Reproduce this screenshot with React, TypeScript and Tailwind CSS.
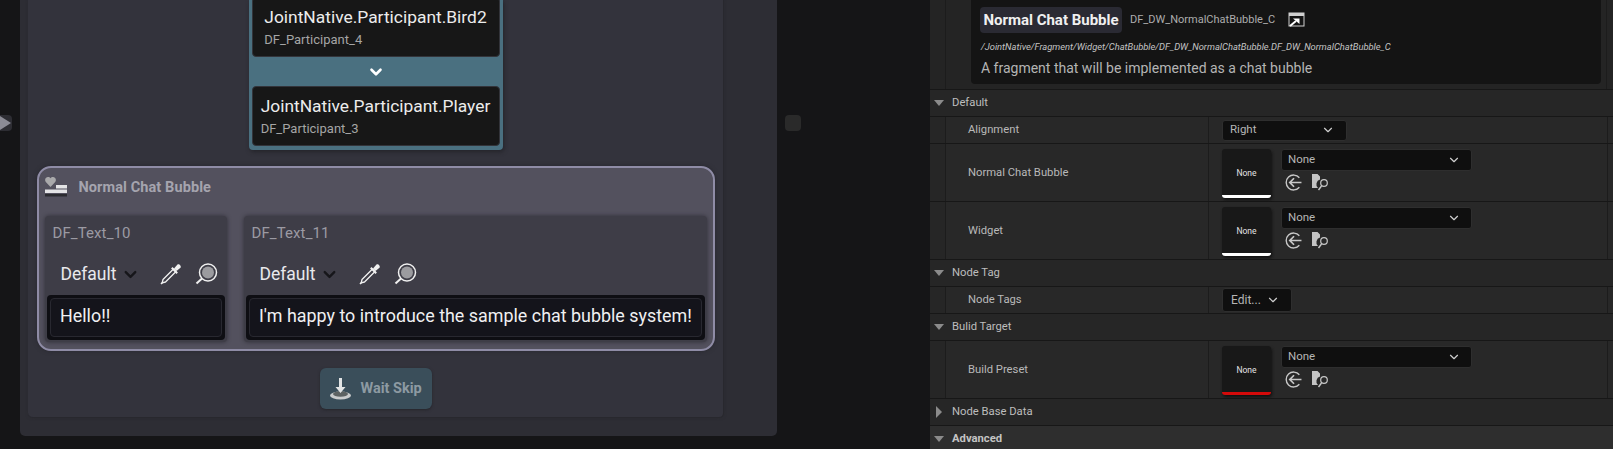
import { ChevronDown } from "lucide-react";
import type { ReactNode } from "react";

const HeartLines = () => (
  <svg width="23" height="20" viewBox="0 0 23 20" className="mt-[1px] shrink-0">
    <path d="M5.500 10 .800 5C-.800 2.800.600 0 3 0c1.200 0 2 .5 2.500 1.300C6 .5 6.800 0 8 0c2.400 0 3.800 2.800 2.200 5z" fill="#a9a9ab" />
    <rect x="11" y="8" width="11" height="3.500" fill="#e4e4e6" />
    <rect x="0" y="12.500" width="22" height="3.500" fill="#e4e4e6" />
    <rect x="0" y="17" width="22" height="2.500" fill="#2b2b30" />
  </svg>
);

const Dropper = () => (
  <svg width="22" height="22" viewBox="0 0 22 22" className="shrink-0">
    <path d="M13.500 6 3 16.500 2.200 19.800 5.500 19 16 8.500z" fill="none" stroke="#f0f0f0" strokeWidth="1.300" strokeLinejoin="round" />
    <path d="M1 21 2.500 19.500" stroke="#f0f0f0" strokeWidth="1.600" />
    <path d="M11.800 4.800 17.200 10.200" stroke="#f0f0f0" strokeWidth="2" />
    <path d="M14 5.500 17.500 1.500c1.400-1.200 4.200 1.400 3 3.200L16.500 8z" fill="#f0f0f0" />
  </svg>
);

const Glass = () => (
  <svg width="23" height="22" viewBox="0 0 23 22" className="shrink-0">
    <circle cx="13" cy="9.500" r="8.500" fill="none" stroke="#f0f0f0" strokeWidth="1.500" />
    <circle cx="13" cy="9.500" r="6" fill="#9b9b9f" />
    <path d="M1.500 20.500 7 15.500" stroke="#f0f0f0" strokeWidth="2" />
  </svg>
);

const WaitIcon = () => (
  <svg width="23" height="24" viewBox="0 0 23 24" className="shrink-0">
    <ellipse cx="11.500" cy="18.500" rx="10.500" ry="4" fill="#c9cbcc" />
    <ellipse cx="11.500" cy="17" rx="7.500" ry="2.800" fill="#5d6262" />
    <path d="M10 1h3v9h3.500l-5 6-5-6H10z" fill="#e2e4e5" />
  </svg>
);

const Shortcut = () => (
  <svg width="17" height="15" viewBox="0 0 17 15" className="shrink-0">
    <rect x="1" y="1" width="15" height="13" fill="none" stroke="#d0d0d0" strokeWidth="1" />
    <rect x="1" y="1" width="15" height="3" fill="#d0d0d0" />
    <path d="M2 14 8 9" stroke="#fff" strokeWidth="2" />
    <path d="M5 6.500h6.500V12z" fill="#fff" />
  </svg>
);

const UseArrow = () => (
  <svg width="17" height="17" viewBox="0 0 16 16">
    <path d="M13.500 3.500A7 7 0 1 0 13.500 12.500" fill="none" stroke="#c8c8c8" strokeWidth="1.300" />
    <path d="M15.500 8H5M8.500 4 4.500 8l4 4" fill="none" stroke="#c8c8c8" strokeWidth="1.600" />
  </svg>
);

const FolderFind = () => (
  <svg width="17" height="17" viewBox="0 0 17 17">
    <path d="M0 0h5.500L8 2.500v3A5 5 0 0 0 6 14H0z" fill="#c4c4c4" />
    <circle cx="12" cy="9" r="3.300" fill="none" stroke="#c8c8c8" strokeWidth="1.200" />
    <path d="M6.500 16 9.500 12" stroke="#c8c8c8" strokeWidth="1.400" />
  </svg>
);

const ParticipantCard = ({ title, id }: { title: string; id: string }) => (
  <div className="flex h-[60px] w-[248px] shrink-0 justify-center rounded border border-[#33343a] bg-[#171717] pt-[8px]">
    <div>
      <div className="text-[17.400px] leading-[22px] text-[#ececec]">{title}</div>
      <div className="mt-[1px] text-[13px] leading-[22px] text-[#a5a5a5]">{id}</div>
    </div>
  </div>
);

const TextField = ({ name, text, className }: { name: string; text: string; className: string }) => (
  <div className={`flex h-[126px] shrink-0 flex-col rounded bg-[#3e3d47] shadow-[0_0_4px_#2f2e37] ${className}`}>
    <div className="mt-[8px] pl-2 text-[15px] leading-[18px] tracking-[.1px] text-[#9b9aa3]">{name}</div>
    <div className="mt-[20px] flex h-[24px] items-center pl-4">
      <span className="w-[61px] text-[17.500px] leading-[24px] text-[#e9e9ec]">Default</span>
      <ChevronDown size={19} strokeWidth={3} className="-ml-[1px] text-[#16161a]" />
      <div className="ml-[20px] flex items-center gap-[13px]">
        <Dropper />
        <Glass />
      </div>
    </div>
    <div className="mx-[2px] mt-[9px] flex h-[45px] items-center rounded bg-[#0e0e13] p-[3px]">
      <div className="flex h-full w-full items-center rounded border border-[#282830] bg-[#14141b] pb-[2px] pl-[9.500px] text-[17.900px] text-[#f0f0f2]">
        {text}
      </div>
    </div>
  </div>
);

const Section = ({ label, open = true, advanced = false }: { label: string; open?: boolean; advanced?: boolean }) => (
  <div className={`flex h-[27px] shrink-0 items-center border-b border-[#171717] pl-[4px] ${advanced ? "bg-[#2e2e2e]" : "bg-[#262626]"}`}>
    <span className="flex w-[10px] justify-center">
      {open ? (
        <span className="h-0 w-0 border-x-[5px] border-t-[6px] border-x-transparent border-t-[#8b8b8b]" />
      ) : (
        <span className="h-0 w-0 border-y-[6px] border-l-[6px] border-y-transparent border-l-[#8b8b8b]" />
      )}
    </span>
    <span className={`ml-[8px] text-[11.250px] ${advanced ? "font-bold text-[#c4c4c4]" : "text-[#bdbdbd]"}`}>{label}</span>
  </div>
);

const PropRow = ({ label, tall = false, children }: { label: string; tall?: boolean; children: ReactNode }) => (
  <div className={`flex shrink-0 border-b border-[#171717] bg-[#282828] ${tall ? "h-[58px]" : "h-[27px]"}`}>
    <div className="w-[16px] shrink-0 border-r border-[#1c1c1c] bg-[#262626]" />
    <div className={`flex w-[263px] shrink-0 items-center border-r border-[#1c1c1c] pl-[22px] text-[11.250px] text-[#b9b9b9] ${tall ? "pt-[2px]" : ""}`}>
      {label}
    </div>
    <div className="flex min-w-0 flex-1 items-center pl-[13px]">{children}</div>
    <div className="w-[6px] shrink-0 border-l border-[#1c1c1c]" />
  </div>
);

const AssetPicker = ({ bar }: { bar: string }) => (
  <div className="mt-[1px] flex items-start">
    <div className={`flex h-[49px] w-[49px] items-center justify-center rounded-[3px] border-b-[3px] bg-[#181818] pt-[4px] text-[8.500px] text-[#e4e4e4] shadow-[1px_2px_3px_#111] ${bar}`}>
      None
    </div>
    <div className="ml-[10px] flex flex-col">
      <div className="flex h-[22px] w-[191px] items-center justify-between rounded-[3px] border border-[#2e2e2e] bg-[#0f0f0f] pl-[6px] pr-[10px] text-[11.500px] text-[#b5b5b5]">
        None
        <ChevronDown size={14} strokeWidth={2} className="text-[#cfcfcf]" />
      </div>
      <div className="mt-[3px] flex items-center gap-[10px] pl-[4px]">
        <UseArrow />
        <FolderFind />
      </div>
    </div>
  </div>
);

const ChatBubble = () => (
  <div className="mt-[16px] h-[185px] w-[678px] shrink-0 rounded-[14px] border-2 border-[#8f8ca6] bg-[#53515e] pl-[6px] pr-[6px] shadow-[0_0_4px_#27272e]">
    <div className="flex h-[48px] items-start pt-[8px]">
      <HeartLines />
      <span className="ml-[11px] mt-[2px] text-[14.500px] font-bold leading-[20px] tracking-[.1px] text-[#a5a4ae]">Normal Chat Bubble</span>
    </div>
    <div className="flex gap-[17px]">
      <TextField name="DF_Text_10" text="Hello!!" className="w-[182px]" />
      <TextField name="DF_Text_11" text="I'm happy to introduce the sample chat bubble system!" className="w-[463px]" />
    </div>
  </div>
);

const GraphArea = () => (
  <div className="relative h-full w-[930px] shrink-0 overflow-hidden bg-[#151517] pl-[20px]">
    <div className="absolute left-0 top-[115px] flex h-4 w-[12px] items-center rounded-r bg-[#2d2d33]">
      <span className="h-0 w-0 border-y-[7px] border-l-[11px] border-y-transparent border-l-[#8b8b95]" />
    </div>
    <div className="absolute left-[785px] top-[115px] h-4 w-[16px] rounded bg-[#2a2a2a]" />
    <div className="h-[436px] w-[757px] rounded-b-[5px] bg-[#2d2d34] pl-2">
      <div className="flex h-[418px] w-[696px] flex-col items-center rounded-b-[5px] border-b border-r border-[#28282e] bg-[#33333c] shadow-[0_0_3px_#2a2a30]">
        <div className="flex h-[150px] w-[254px] shrink-0 flex-col justify-end overflow-hidden rounded-b bg-[#4a7080] px-[3px] pb-[4px] shadow-[1px_2px_4px_#24242a]">
          <ParticipantCard title="JointNative.Participant.Bird2" id="DF_Participant_4" />
          <div className="flex h-[29px] shrink-0 items-center justify-center">
            <ChevronDown size={18} strokeWidth={3.500} className="text-white" />
          </div>
          <ParticipantCard title="JointNative.Participant.Player" id="DF_Participant_3" />
        </div>
        <ChatBubble />
        <div className="mt-[17px] flex h-[41px] w-[112px] shrink-0 items-center rounded-md bg-[#3a4e5a] pl-[9px] shadow-[0_1px_3px_#25252b]">
          <WaitIcon />
          <span className="ml-[9px] text-[14.500px] font-bold text-[#8d9aa2]">Wait Skip</span>
        </div>
      </div>
    </div>
  </div>
);

const DetailsPanel = () => (
  <div className="flex h-full min-w-0 flex-1 flex-col overflow-hidden bg-[#242424]">
    <div className="flex h-[90px] shrink-0 border-b border-[#171717]">
      <div className="w-[16px] shrink-0 border-r border-[#1c1c1c]" />
      <div className="ml-[25px] flex h-[84px] w-[630px] shrink-0 flex-col rounded-b bg-[#141414] pl-[9px]">
        <div className="mt-[7px] flex h-[26px] items-center">
          <div className="flex h-full w-[142px] items-center justify-center rounded bg-[#2a2a33] text-[15px] font-bold text-[#f0f0f0]">Normal Chat Bubble</div>
          <span className="ml-2 text-[11px] text-[#adadad]">DF_DW_NormalChatBubble_C</span>
          <span className="ml-[13px] -mt-[2px]">
            <Shortcut />
          </span>
        </div>
        <div className="mt-[8px] pl-[1px] text-[9.350px] leading-[12px] italic text-[#c4c4c4]">
          /JointNative/Fragment/Widget/ChatBubble/DF_DW_NormalChatBubble.DF_DW_NormalChatBubble_C
        </div>
        <div className="mt-[6px] pl-[1px] text-[14px] leading-[18px] text-[#b4b4b4]">A fragment that will be implemented as a chat bubble</div>
      </div>
      <div className="ml-[5px] flex-1 border-l border-[#1c1c1c]" />
    </div>
    <Section label="Default" />
    <PropRow label="Alignment">
      <div className="flex h-[21px] w-[125px] items-center justify-between rounded-[3px] border border-[#2e2e2e] bg-[#0f0f0f] pl-[7px] pr-[11px] text-[11.500px] text-[#b5b5b5]">
        Right
        <ChevronDown size={14} strokeWidth={2} className="text-[#cfcfcf]" />
      </div>
    </PropRow>
    <PropRow label="Normal Chat Bubble" tall>
      <AssetPicker bar="border-white" />
    </PropRow>
    <PropRow label="Widget" tall>
      <AssetPicker bar="border-white" />
    </PropRow>
    <Section label="Node Tag" />
    <PropRow label="Node Tags">
      <div className="flex h-[24px] w-[70px] items-center gap-[5px] rounded-[3px] border border-[#2e2e2e] bg-[#0f0f0f] pl-[8px] text-[12px] text-[#b5b5b5]">
        Edit...
        <ChevronDown size={14} strokeWidth={2} className="text-[#cfcfcf]" />
      </div>
    </PropRow>
    <Section label="Bulid Target" />
    <PropRow label="Build Preset" tall>
      <AssetPicker bar="border-[#d40a0a]" />
    </PropRow>
    <Section label="Node Base Data" open={false} />
    <Section label="Advanced" advanced />
  </div>
);

export default function App() {
  return (
    <div className="flex h-[449px] w-[1613px] overflow-hidden font-['Roboto',sans-serif]">
      <GraphArea />
      <DetailsPanel />
    </div>
  );
}
